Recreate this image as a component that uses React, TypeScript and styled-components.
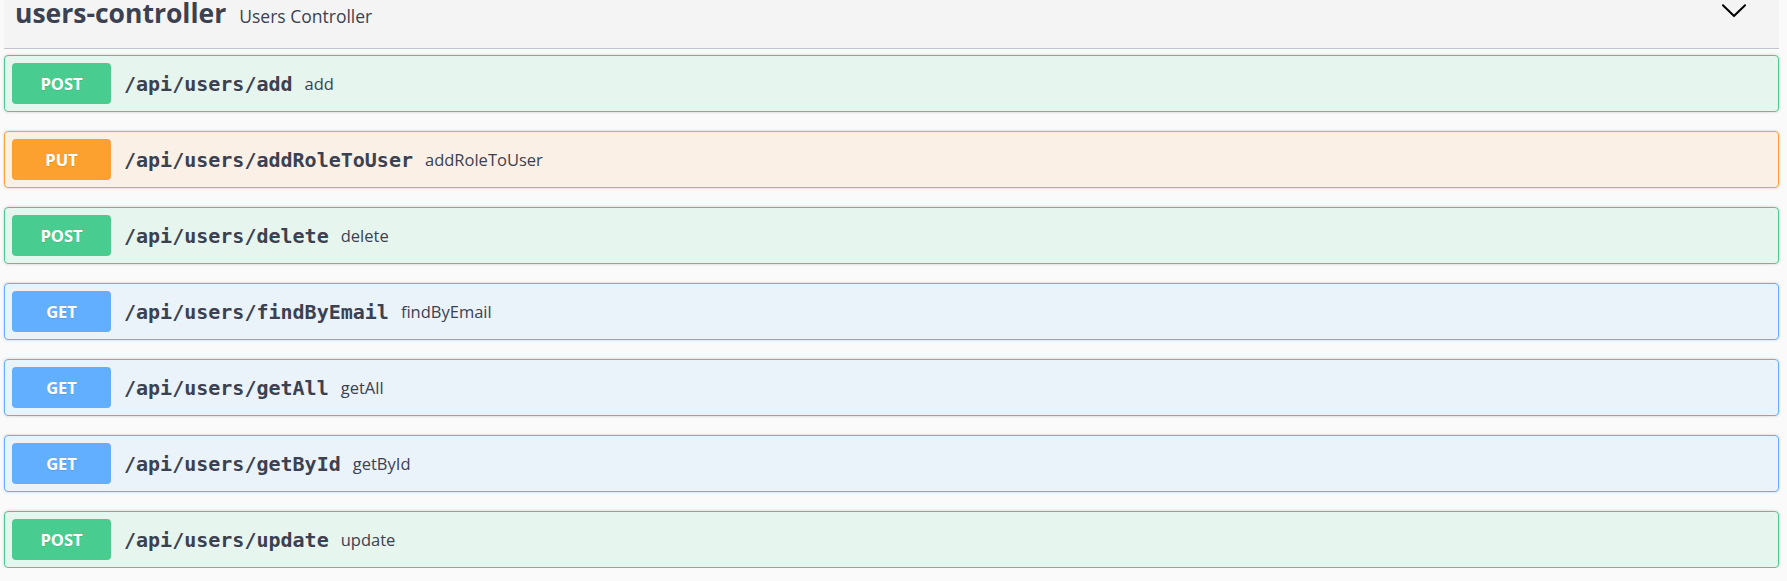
import styled, { createGlobalStyle } from 'styled-components';

const GlobalStyle = createGlobalStyle`
    html, body {
        margin: 0;
        padding: 0;
        background: #fafafa;
    }
    body {
        font-family: "Open Sans", "Noto Sans", sans-serif;
        color: #3b4151;
    }
`;

type Method = 'post' | 'put' | 'get';

const colors: Record<Method, string> = {
    post: '73, 204, 144',
    put: '252, 161, 48',
    get: '97, 175, 254',
};

const Page = styled.div`
    padding: 0 8px 0 4px;
`;

const TagHeader = styled.div`
    display: flex;
    align-items: baseline;
    height: 48px;
    padding-left: 11px;
    padding-right: 31px;
    background: #f4f4f4;
    border-bottom: 1px solid #c4c5ca;
`;

const TagName = styled.h4`
    margin: 0;
    font-size: 26.5px;
    line-height: 27px;
    font-weight: 700;
    color: #3b4151;
`;

const TagDescription = styled.small`
    margin-left: 13px;
    font-size: 17.5px;
    font-weight: 400;
    color: #3b4151;
    flex: 1;
`;

const Chevron = styled.svg`
    align-self: flex-start;
    margin-top: -4px;
    width: 28px;
    height: 28px;
    fill: #000;
`;

const OperationList = styled.div`
    padding-top: 6px;
    display: flex;
    flex-direction: column;
    gap: 19px;
`;

const Operation = styled.div<{ $method: Method }>`
    display: flex;
    align-items: center;
    padding: 7px;
    border: 1px solid rgb(${p => colors[p.$method]});
    border-radius: 4px;
    background: rgba(${p => colors[p.$method]}, 0.1);
    box-shadow: 0 0 3px rgba(0, 0, 0, 0.19);
`;

const MethodBadge = styled.span<{ $method: Method }>`
    display: flex;
    align-items: center;
    justify-content: center;
    width: 99px;
    height: 41px;
    border-radius: 4px;
    background: rgb(${p => colors[p.$method]});
    color: #fff;
    font-size: 16.5px;
    font-weight: 700;
    text-transform: uppercase;
    text-shadow: 0 1px 0 rgba(0, 0, 0, 0.1);
`;

const Path = styled.span`
    margin-left: 13px;
    font-family: "DejaVu Sans Mono", "Liberation Mono", monospace;
    font-size: 20px;
    font-weight: 700;
    color: #3b4151;
`;

const Summary = styled.span`
    margin-left: 12px;
    font-size: 16.5px;
    color: #3b4151;
`;

const operations: { method: Method; path: string; summary: string }[] = [
    { method: 'post', path: '/api/users/add', summary: 'add' },
    { method: 'put', path: '/api/users/addRoleToUser', summary: 'addRoleToUser' },
    { method: 'post', path: '/api/users/delete', summary: 'delete' },
    { method: 'get', path: '/api/users/findByEmail', summary: 'findByEmail' },
    { method: 'get', path: '/api/users/getAll', summary: 'getAll' },
    { method: 'get', path: '/api/users/getById', summary: 'getById' },
    { method: 'post', path: '/api/users/update', summary: 'update' },
];

export default function App() {
    return (
        <>
            <GlobalStyle />
            <Page>
                <TagHeader>
                    <TagName>users-controller</TagName>
                    <TagDescription>Users Controller</TagDescription>
                    <Chevron viewBox="0 0 20 20">
                        <path d="M17.418 6.109c.272-.268.709-.268.979 0s.271.701 0 .969l-7.908 7.83c-.27.268-.707.268-.979 0l-7.908-7.83c-.27-.268-.27-.701 0-.969.271-.268.709-.268.979 0L10 13.25l7.418-7.141z" />
                    </Chevron>
                </TagHeader>
                <OperationList>
                    {operations.map(op => (
                        <Operation key={op.path} $method={op.method}>
                            <MethodBadge $method={op.method}>{op.method}</MethodBadge>
                            <Path>{op.path}</Path>
                            <Summary>{op.summary}</Summary>
                        </Operation>
                    ))}
                </OperationList>
            </Page>
        </>
    );
}
